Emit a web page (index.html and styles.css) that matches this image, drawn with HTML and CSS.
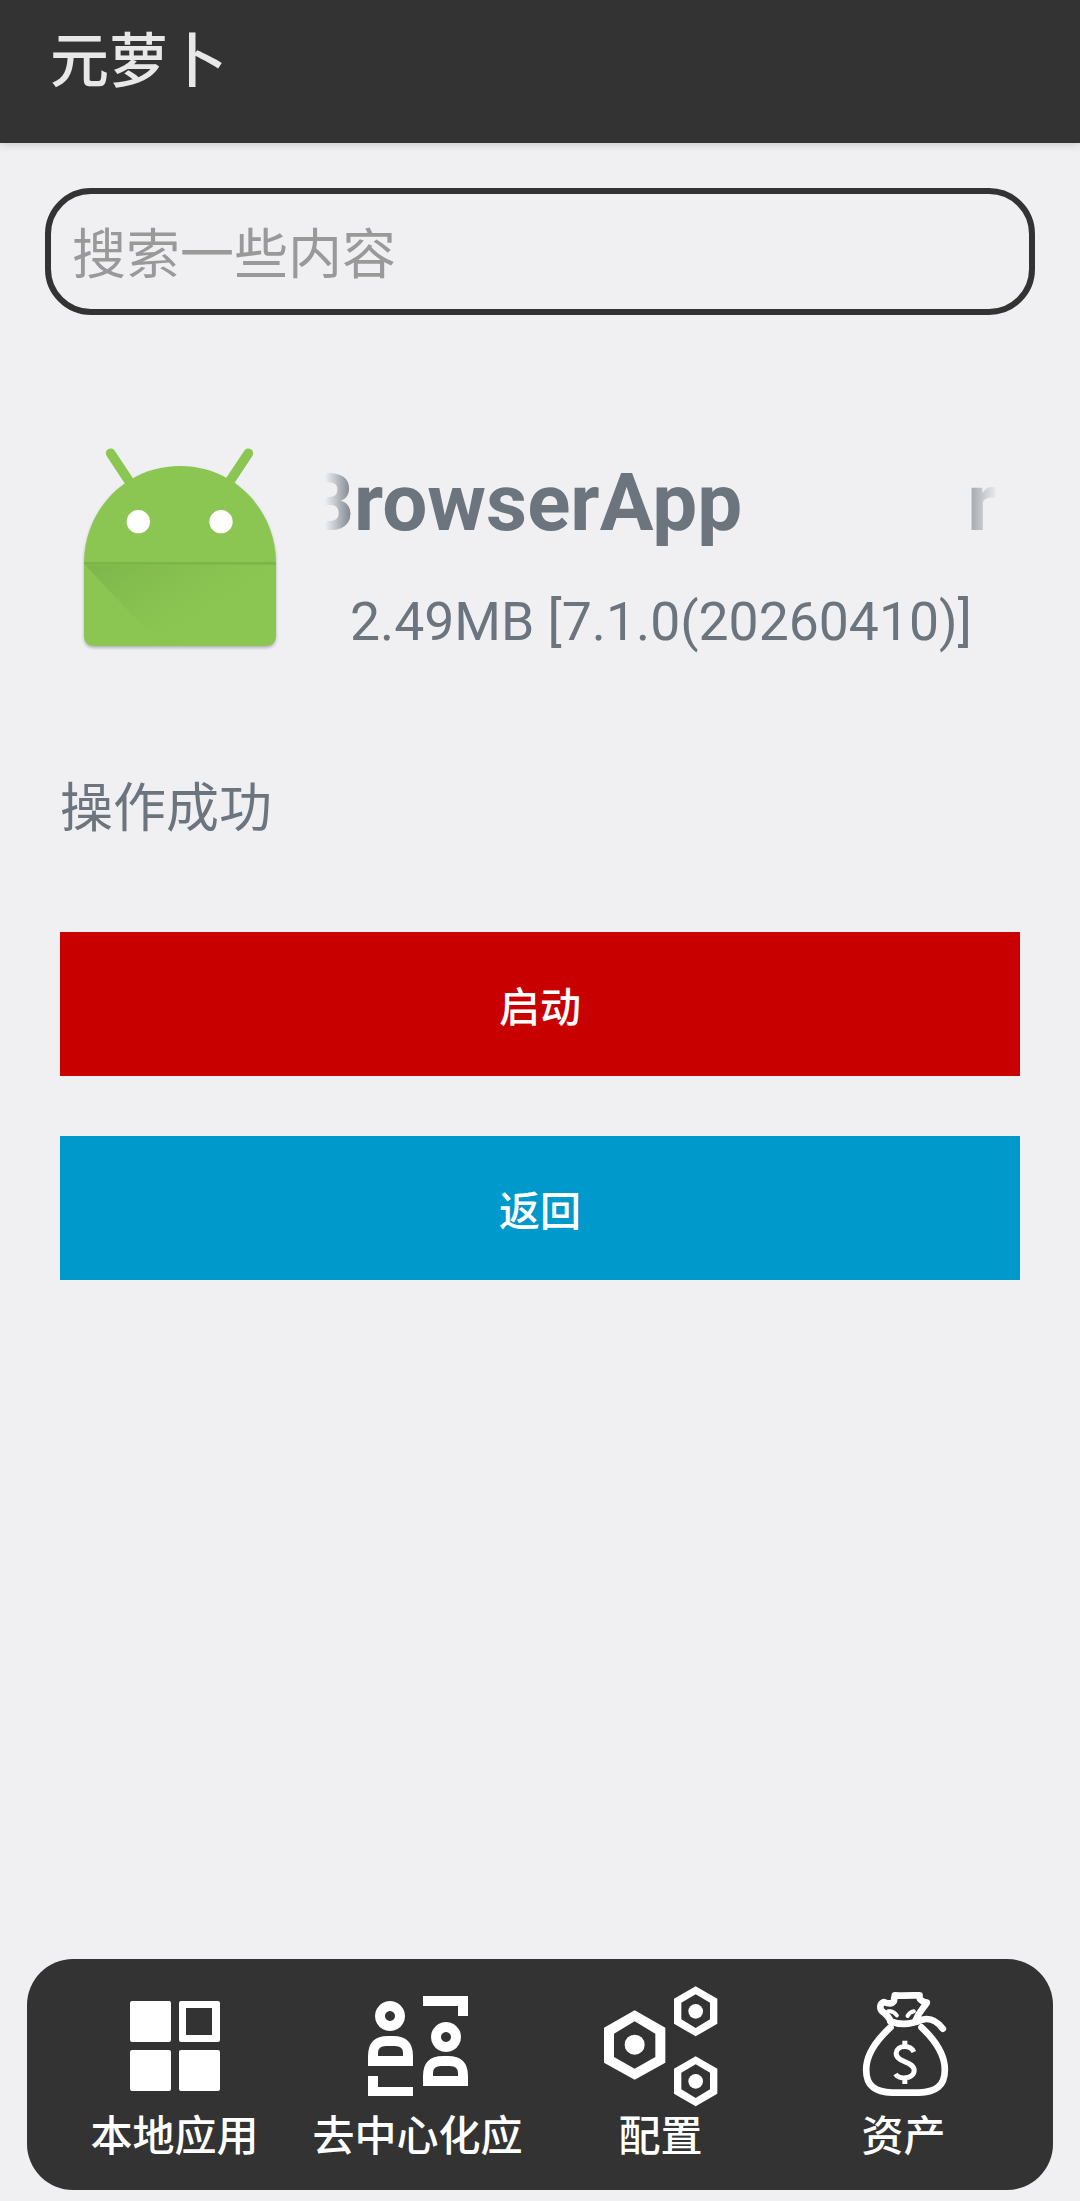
FILE: index.html
```html
<!DOCTYPE html>
<html>
<head>
<title>元萝卜</title>
<link rel="stylesheet" href="styles.css">
</head>
<body>

<div class="page">
  <header class="topbar">元萝卜</header>

  <div class="search-wrap">
    <input class="search" type="text" placeholder="搜索一些内容">
  </div>

  <div class="app-row">
    <svg class="app-icon" viewBox="120 75 600 615">
      <defs>
        <linearGradient id="fold" x1="0" y1="0" x2="1" y2="0.7">
          <stop offset="0" stop-color="#6fa544" stop-opacity="0.5"/>
          <stop offset="0.9" stop-color="#8bc34f" stop-opacity="0"/>
        </linearGradient>
      </defs>
      <path d="M212 100 L265 180 M625 100 L572 180" stroke="#8bc652" stroke-width="29" stroke-linecap="round" fill="none"/>
      <path class="robot-body" d="M132 430 C132 268 258 138 420 138 C582 138 708 268 708 430 V645 Q708 678 675 678 H165 Q132 678 132 645 Z"/>
      <path d="M136 436 H704 L430 675 H360 Z" fill="url(#fold)"/>
      <rect x="132" y="426" width="576" height="8" fill="#7cb548"/>
      <circle cx="295" cy="305" r="35" fill="#fff"/>
      <circle cx="543" cy="305" r="35" fill="#fff"/>
    </svg>
    <div class="app-info">
      <div class="marquee"><div class="marquee-text"><span>BrowserApp</span><span>r</span></div></div>
      <div class="app-meta">2.49MB [7.1.0(20260410)]</div>
    </div>
  </div>

  <p class="status">操作成功</p>

  <div class="actions">
    <button class="btn btn-start">启动</button>
    <button class="btn btn-back">返回</button>
  </div>

  <nav class="tabbar">
    <div class="tab">
      <div class="tab-icon">
        <svg width="90" height="90" viewBox="0 0 90 90" fill="#fff">
          <rect x="0" y="0" width="41" height="41" rx="2"/>
          <path fill-rule="evenodd" d="M51 0 H88 Q90 0 90 2 V39 Q90 41 88 41 H51 Q49 41 49 39 V2 Q49 0 51 0 Z M56 7 V34 H82 V7 Z"/>
          <rect x="0" y="49" width="41" height="41" rx="2"/>
          <rect x="49" y="49" width="41" height="41" rx="2"/>
        </svg>
      </div>
      <span>本地应用</span>
    </div>
    <div class="tab">
      <div class="tab-icon">
        <svg width="100" height="100" viewBox="0 0 100 100" fill="#fff" fill-rule="evenodd">
          <path d="M22 5 a15 15 0 1 0 .01 0 Z M22 15 a5 5 0 1 1 -.01 0 Z"/>
          <path d="M78 26 a15 15 0 1 0 .01 0 Z M78 36 a5 5 0 1 1 -.01 0 Z"/>
          <path d="M0 70 V60 Q0 40 20 40 H25 Q45 40 45 60 V70 Z M10 60 H35 V57 Q35 50 27 50 H18 Q10 50 10 57 Z"/>
          <path d="M55 90 V80 Q55 60 75 60 H80 Q100 60 100 80 V90 Z M65 80 H90 V77 Q90 70 82 70 H73 Q65 70 65 77 Z"/>
          <path d="M0 80 H10 V91 H45 V100 H0 Z"/>
          <path d="M55 0 H100 V20 H90 V10 H55 Z"/>
        </svg>
      </div>
      <span>去中心化应</span>
    </div>
    <div class="tab">
      <div class="tab-icon">
        <svg width="126" height="128" viewBox="0 0 378 384" fill="#fff" fill-rule="evenodd">
          <path d="M110 85 L202 137 V242 L110 293 L18 242 V137 Z M110 118 L48 155 V225 L110 260 L172 225 V155 Z"/>
          <circle cx="110" cy="188" r="30"/>
          <path d="M293 13 L358 50 V125 L293 163 L228 125 V50 Z M293 37 L250 62 V112 L293 138 L336 112 V62 Z"/>
          <circle cx="293" cy="88" r="22"/>
          <path d="M293 223 L358 260 V335 L293 373 L228 335 V260 Z M293 247 L250 272 V322 L293 348 L336 322 V272 Z"/>
          <circle cx="293" cy="298" r="22"/>
        </svg>
      </div>
      <span>配置</span>
    </div>
    <div class="tab">
      <div class="tab-icon">
        <svg width="100" height="112" viewBox="-4.500 6 300 336" fill="none" stroke="#fff" stroke-width="20" stroke-linecap="round" stroke-linejoin="round">
          <path d="M105 118 C70 150 32 195 32 245 C32 295 60 312 110 314 H190 C240 312 268 295 268 245 C268 195 232 150 198 118"/>
          <path d="M105 100 C135 112 170 108 200 95 C225 88 245 100 262 122"/>
          <path d="M105 100 C100 85 90 78 80 70 C72 62 72 48 85 42 C100 48 110 48 115 40 L118 22 C140 24 175 22 192 22 C190 32 198 42 214 44 C205 60 190 70 180 98"/>
          <path d="M98 70 C110 68 118 74 124 82 M175 70 C165 72 160 76 156 84" stroke-width="12"/>
          <path d="M175 192 C165 170 125 170 122 195 C120 225 178 218 176 248 C174 275 130 275 120 258 M148 158 V174 M148 272 V288" stroke-width="15" stroke-linecap="butt"/>
        </svg>
      </div>
      <span>资产</span>
    </div>
  </nav>
</div>

</body>
</html>
```

FILE: styles.css
```css
* {
  box-sizing: border-box;
}

body {
  margin: 0;
  background: #f0f0f3;
  font-family: Roboto, "Noto Sans CJK SC", sans-serif;
}

.page {
  width: 1080px;
  height: 2201px;
  display: flex;
  flex-direction: column;
}

.topbar {
  height: 143px;
  padding: 28px 0 0 50px;
  background: #333;
  color: #e8e8e8;
  font-size: 59px;
  font-weight: 500;
  line-height: 68px;
  box-shadow: 0 2px 8px rgba(0, 0, 0, 0.15);
}

.search-wrap {
  padding: 45px 45px 0;
}

.search {
  display: block;
  width: 100%;
  height: 127px;
  padding: 8px 21px 0;
  border: 6px solid #333;
  border-radius: 46px;
  background: #f0f0f3;
  font-family: inherit;
  font-size: 54px;
  outline: none;
}

.search::placeholder {
  color: #999;
  opacity: 1;
}

.app-row {
  display: flex;
  padding: 130px 0 0 80px;
}

.app-icon {
  width: 200px;
  height: 205px;
  flex: none;
}

.robot-body {
  fill: #8bc652;
  filter: drop-shadow(0 6px 5px rgba(0, 0, 0, 0.25));
}

.app-info {
  width: 673px;
  margin-left: 45px;
  padding-top: 10px;
  color: #6c757d;
}

.marquee {
  overflow: hidden;
  height: 96px;
  -webkit-mask-image: linear-gradient(to right, transparent 0, #000 30px, #000 625px, transparent 673px);
  mask-image: linear-gradient(to right, transparent 0, #000 30px, #000 625px, transparent 673px);
}

.marquee-text {
  display: flex;
  gap: 225px;
  margin-left: -22px;
  white-space: nowrap;
  font-size: 80px;
  font-weight: 700;
  line-height: 96px;
}

.app-meta {
  margin-top: 41px;
  padding-left: 25px;
  font-size: 53.5px;
  line-height: 60px;
  white-space: nowrap;
}

.status {
  margin: 126px 0 0 60px;
  color: #6c757d;
  font-size: 53px;
  line-height: 62px;
}

.actions {
  display: flex;
  flex-direction: column;
  gap: 60px;
  padding: 92px 60px 0;
}

.btn {
  height: 144px;
  border: none;
  color: #fff;
  font-family: inherit;
  font-size: 41px;
  font-weight: 500;
}

.btn-start {
  background: #c80000;
}

.btn-back {
  background: #09c;
}

.tabbar {
  display: grid;
  grid-template-columns: repeat(4, 243px);
  height: 231px;
  margin: auto 27px 11px;
  padding: 27px 26px 0;
  border-radius: 46px;
  background: #333;
}

.tab {
  display: flex;
  flex-direction: column;
  align-items: center;
  color: #fff;
  font-size: 42px;
  font-weight: 500;
  line-height: 48px;
  white-space: nowrap;
}

.tab-icon {
  display: flex;
  align-items: center;
  justify-content: center;
  height: 120px;
  margin-bottom: 7px;
}
```
